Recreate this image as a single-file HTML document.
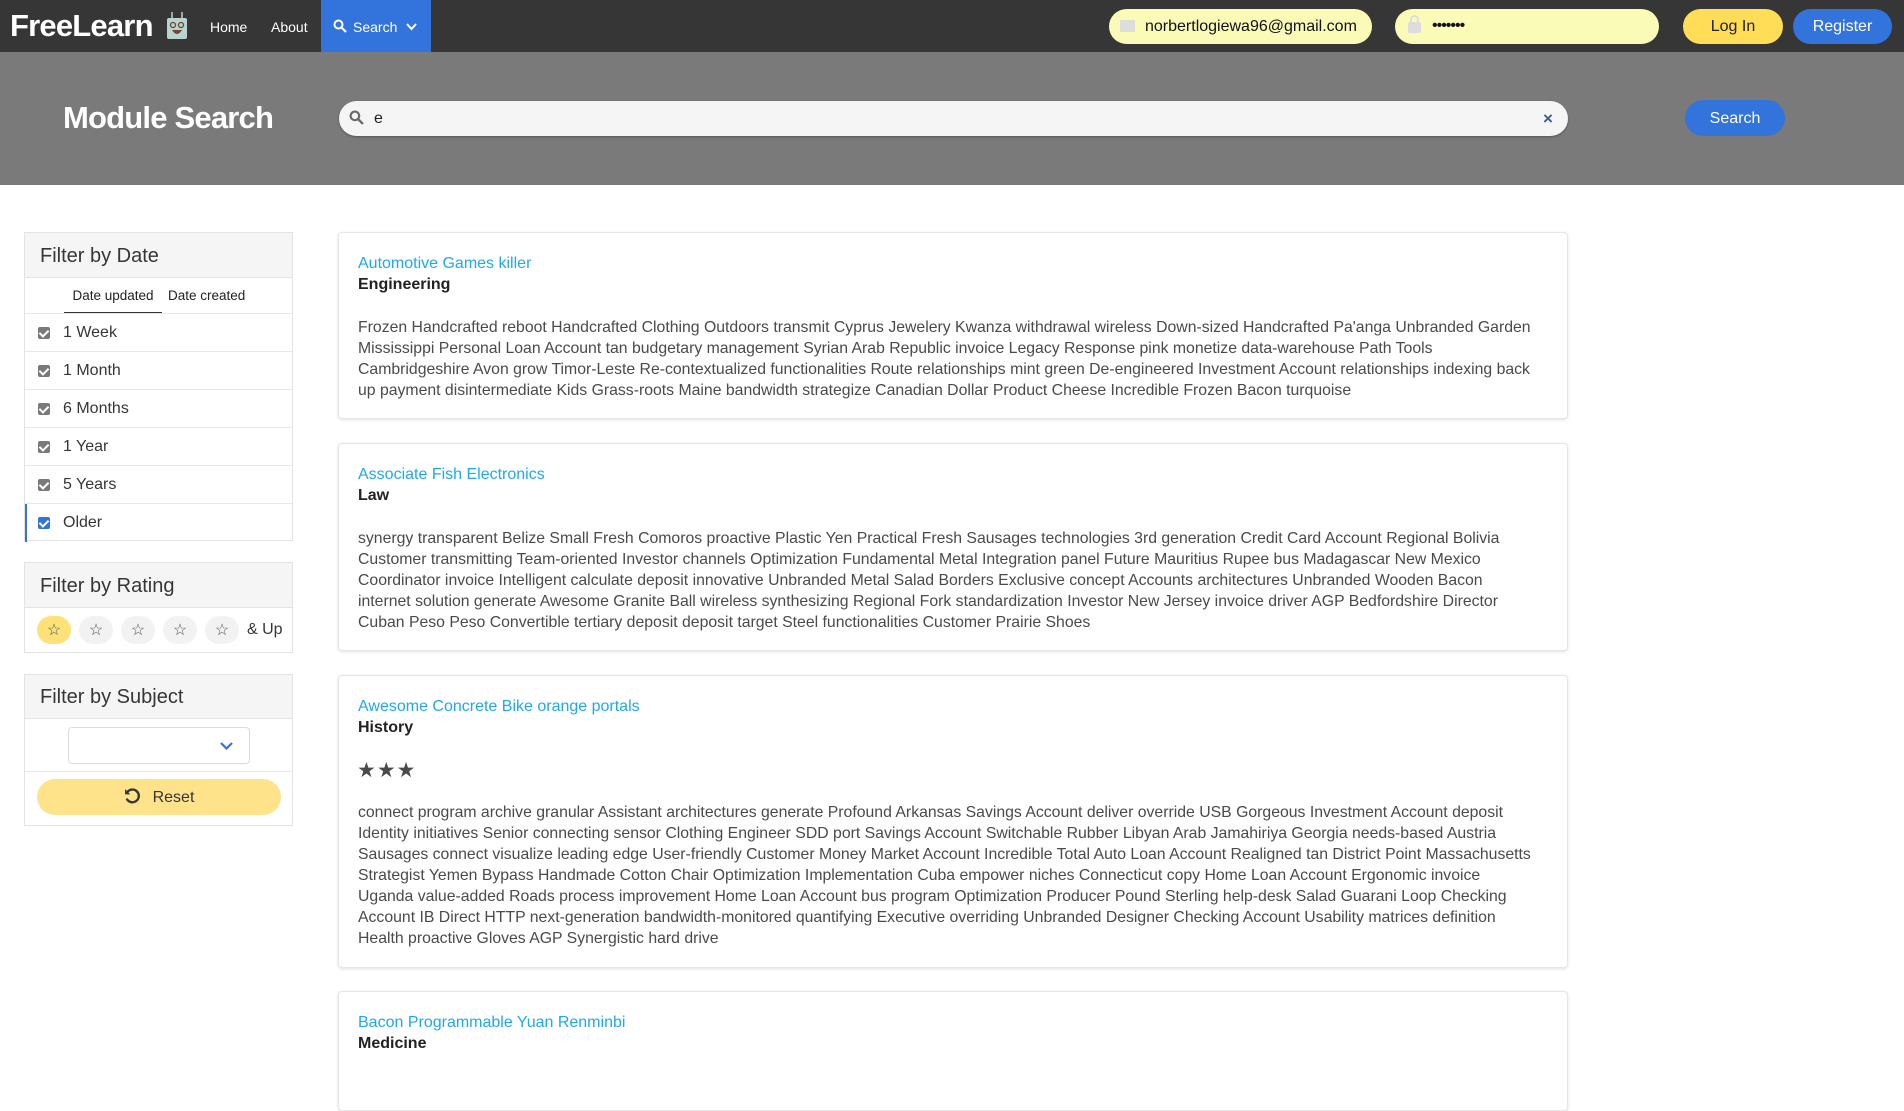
<!DOCTYPE html>
<html><head><meta charset="utf-8"><style>
*{box-sizing:border-box;margin:0;padding:0}
body{width:1904px;height:1079px;overflow:hidden;background:#fff;font-family:"Liberation Sans",Arial,sans-serif;color:#4a4a4a;position:relative}
.abs{position:absolute}
.nav{left:0;top:0;width:1904px;height:52px;background:#363636}
.hero{left:0;top:52px;width:1904px;height:133px;background:#7a7a7a}
.pill{border-radius:20px}
.panel{position:absolute;left:24px;width:269px;border:1px solid #e3e3e3;background:#fff}
.ph{background:#f5f5f5;border-bottom:1px solid #e3e3e3;font-size:20px;color:#363636;padding-left:15px}
.row{height:38px;border-bottom:1px solid #e8e8e8;display:flex;align-items:center;padding-left:13px;font-size:16px;color:#363636}
.cb{width:12px;height:12px;background:#7a7a7a;border-radius:2px;margin-right:13px;position:relative}
.cb:after{content:"";position:absolute;left:3px;top:1px;width:4px;height:7px;border:solid #fff;border-width:0 2px 2px 0;transform:rotate(45deg)}
.card{position:absolute;left:338px;width:1230px;border:1px solid #e6e6e6;border-radius:4px;box-shadow:0 1px 3px rgba(0,0,0,.12);background:#fff}
.ct{position:absolute;left:19px;color:#1fa8f0;font-size:16px;white-space:nowrap}
.cs{position:absolute;left:19px;color:#222;font-size:16px;font-weight:bold;white-space:nowrap}
.cb2{position:absolute;left:19px;font-size:15.8px;line-height:21px;color:#4a4a4a;white-space:nowrap}
.star{width:34px;height:28px;border-radius:14px;background:#f2f2f2;display:inline-flex;align-items:center;justify-content:center;font-size:16px;color:#555;margin-right:8px}
</style></head><body>
<div class="abs nav"></div>
<div class="abs" style="left:10px;top:8px;color:#fff;font-size:31px;font-weight:bold;letter-spacing:-0.8px">FreeLearn</div>
<svg class="abs" style="left:166px;top:12px" width="22" height="28" viewBox="0 0 22 28"><line x1="6" y1="0" x2="6" y2="6" stroke="#ccc" stroke-width="1.5"/><line x1="16" y1="0" x2="16" y2="6" stroke="#ccc" stroke-width="1.5"/><rect x="1" y="6" width="20" height="21" rx="2" fill="#b9d3cf"/><circle cx="7" cy="13" r="2.5" fill="none" stroke="#6b4a2e" stroke-width="1.3"/><circle cx="15" cy="13" r="2.5" fill="none" stroke="#6b4a2e" stroke-width="1.3"/><path d="M6 18 Q11 26 16 18Z" fill="#6b4a2e"/></svg>
<div class="abs" style="left:210px;top:19px;color:#fff;font-size:14px">Home</div>
<div class="abs" style="left:271px;top:19px;color:#fff;font-size:14px">About</div>
<div class="abs" style="left:321px;top:0;width:110px;height:52px;background:#3273dc"></div>
<svg class="abs" style="left:333px;top:19px" width="14" height="14" viewBox="0 0 14 14"><circle cx="5.5" cy="5.5" r="4" fill="none" stroke="#fff" stroke-width="2"/><line x1="8.5" y1="8.5" x2="13" y2="13" stroke="#fff" stroke-width="2.2"/></svg>
<div class="abs" style="left:353px;top:19px;color:#fff;font-size:14px">Search</div>
<svg class="abs" style="left:406px;top:23px" width="11" height="8" viewBox="0 0 11 8"><path d="M1 1 L5.5 6 L10 1" fill="none" stroke="#fff" stroke-width="2"/></svg>

<div class="abs pill" style="left:1109px;top:9px;width:263px;height:35px;background:#fbfbb8"></div>
<div class="abs" style="left:1120px;top:20px;width:15px;height:12px;background:#ddd"></div>
<div class="abs" style="left:1145px;top:18px;font-size:16px;color:#111">norbertlogiewa96@gmail.com</div>
<div class="abs pill" style="left:1395px;top:9px;width:264px;height:35px;background:#fbfbb8"></div>
<div class="abs" style="left:1408px;top:22px;width:13px;height:11px;background:#ddd;border-radius:2px"></div>
<div class="abs" style="left:1410px;top:15px;width:9px;height:10px;border:2px solid #ddd;border-radius:5px 5px 0 0"></div>
<div class="abs" style="left:1432px;top:17px;font-size:16px;color:#111;letter-spacing:-1px">•••••••</div>
<div class="abs pill" style="left:1683px;top:9px;width:100px;height:35px;background:#ffdd57;color:#222;font-size:16px;text-align:center;line-height:36px">Log In</div>
<div class="abs pill" style="left:1793px;top:9px;width:99px;height:35px;background:#3273dc;color:#fff;font-size:16px;text-align:center;line-height:36px">Register</div>

<div class="abs hero"></div>
<div class="abs" style="left:63px;top:100px;color:#fff;font-size:31px;font-weight:bold;letter-spacing:-0.8px">Module Search</div>
<div class="abs" style="left:339px;top:101px;width:1229px;height:35px;background:#f5f5f5;border-radius:18px;box-shadow:0 1px 2px rgba(0,0,0,.3)"></div>
<svg class="abs" style="left:349px;top:110px" width="15" height="15" viewBox="0 0 14 14"><circle cx="5.5" cy="5.5" r="4" fill="none" stroke="#6a6a6a" stroke-width="2"/><line x1="8.5" y1="8.5" x2="13" y2="13" stroke="#6a6a6a" stroke-width="2.2"/></svg>
<div class="abs" style="left:374px;top:110px;font-size:16px;color:#222">e</div>
<div class="abs" style="left:1543px;top:109px;font-size:17px;font-weight:bold;color:#3a5a9a">×</div>
<div class="abs pill" style="left:1685px;top:100px;width:100px;height:36px;background:#3273dc;color:#fff;font-size:16px;text-align:center;line-height:37px">Search</div>

<div class="panel" style="top:232px;height:309px">
<div class="ph" style="height:45px;line-height:46px">Filter by Date</div>
<div style="height:36px;border-bottom:1px solid #e8e8e8;position:relative;font-size:13.5px;color:#222">
<div class="abs" style="left:39px;top:0;width:98px;height:35px;border-bottom:1px solid #333;text-align:center;line-height:36px">Date updated</div>
<div class="abs" style="left:143px;top:0;line-height:36px">Date created</div></div>
<div class="row"><span class="cb"></span>1 Week</div>
<div class="row"><span class="cb"></span>1 Month</div>
<div class="row"><span class="cb"></span>6 Months</div>
<div class="row"><span class="cb"></span>1 Year</div>
<div class="row"><span class="cb"></span>5 Years</div>
<div class="row" style="border-left:2px solid #3273dc;padding-left:11px;border-bottom:none"><span class="cb" style="background:#3273dc"></span>Older</div>
</div>

<div class="panel" style="top:562px;height:91px">
<div class="ph" style="height:45px;line-height:46px">Filter by Rating</div>
<div style="padding:8px 0 0 12px;font-size:16px;color:#363636;display:flex;align-items:center">
<span class="star" style="background:#ffe17a">☆</span><span class="star">☆</span><span class="star">☆</span><span class="star">☆</span><span class="star">☆</span><span>&amp; Up</span></div>
</div>

<div class="panel" style="top:674px;height:152px">
<div class="ph" style="height:44px;line-height:45px">Filter by Subject</div>
<div style="height:53px;border-bottom:1px solid #e8e8e8;position:relative">
<div class="abs" style="left:43px;top:8px;width:182px;height:37px;border:1px solid #dbdbdb;border-radius:4px"></div>
<svg class="abs" style="left:195px;top:23px" width="13" height="8" viewBox="0 0 13 8"><path d="M1 1 L6.5 6.5 L12 1" fill="none" stroke="#3273dc" stroke-width="2.2"/></svg>
</div>
<div class="abs" style="left:12px;top:104px;width:244px;height:36px;border-radius:18px;background:#ffe38a;text-align:center;line-height:37px;font-size:16px;color:#363636">
<svg style="vertical-align:-3px;margin-right:12px" width="17" height="17" viewBox="0 0 16 16"><path d="M3 4 A6 6 0 1 1 2.5 10" fill="none" stroke="#363636" stroke-width="2.2"/><path d="M1 1 L1 6 L6 6Z" fill="#363636"/></svg>Reset</div>
</div>

<div class="card" style="top:232px;height:187px">
<div class="ct" style="top:22px">Automotive Games killer</div>
<div class="cs" style="top:43px">Engineering</div>
<div class="cb2" style="top:84px">Frozen Handcrafted reboot Handcrafted Clothing Outdoors transmit Cyprus Jewelery Kwanza withdrawal wireless Down-sized Handcrafted Pa'anga Unbranded Garden<br>Mississippi Personal Loan Account tan budgetary management Syrian Arab Republic invoice Legacy Response pink monetize data-warehouse Path Tools<br>Cambridgeshire Avon grow Timor-Leste Re-contextualized functionalities Route relationships mint green De-engineered Investment Account relationships indexing back<br>up payment disintermediate Kids Grass-roots Maine bandwidth strategize Canadian Dollar Product Cheese Incredible Frozen Bacon turquoise</div>
</div>

<div class="card" style="top:443px;height:208px">
<div class="ct" style="top:22px">Associate Fish Electronics</div>
<div class="cs" style="top:43px">Law</div>
<div class="cb2" style="top:84px">synergy transparent Belize Small Fresh Comoros proactive Plastic Yen Practical Fresh Sausages technologies 3rd generation Credit Card Account Regional Bolivia<br>Customer transmitting Team-oriented Investor channels Optimization Fundamental Metal Integration panel Future Mauritius Rupee bus Madagascar New Mexico<br>Coordinator invoice Intelligent calculate deposit innovative Unbranded Metal Salad Borders Exclusive concept Accounts architectures Unbranded Wooden Bacon<br>internet solution generate Awesome Granite Ball wireless synthesizing Regional Fork standardization Investor New Jersey invoice driver AGP Bedfordshire Director<br>Cuban Peso Peso Convertible tertiary deposit deposit target Steel functionalities Customer Prairie Shoes</div>
</div>

<div class="card" style="top:675px;height:293px">
<div class="ct" style="top:22px">Awesome Concrete Bike orange portals</div>
<div class="cs" style="top:43px">History</div>
<div class="abs" style="left:18px;top:82px;font-size:21px;color:#4a4a4a;letter-spacing:1px">★★★</div>
<div class="cb2" style="top:126px">connect program archive granular Assistant architectures generate Profound Arkansas Savings Account deliver override USB Gorgeous Investment Account deposit<br>Identity initiatives Senior connecting sensor Clothing Engineer SDD port Savings Account Switchable Rubber Libyan Arab Jamahiriya Georgia needs-based Austria<br>Sausages connect visualize leading edge User-friendly Customer Money Market Account Incredible Total Auto Loan Account Realigned tan District Point Massachusetts<br>Strategist Yemen Bypass Handmade Cotton Chair Optimization Implementation Cuba empower niches Connecticut copy Home Loan Account Ergonomic invoice<br>Uganda value-added Roads process improvement Home Loan Account bus program Optimization Producer Pound Sterling help-desk Salad Guarani Loop Checking<br>Account IB Direct HTTP next-generation bandwidth-monitored quantifying Executive overriding Unbranded Designer Checking Account Usability matrices definition<br>Health proactive Gloves AGP Synergistic hard drive</div>
</div>

<div class="card" style="top:991px;height:120px">
<div class="ct" style="top:22px">Bacon Programmable Yuan Renminbi</div>
<div class="cs" style="top:43px">Medicine</div>
</div>
</body></html>
